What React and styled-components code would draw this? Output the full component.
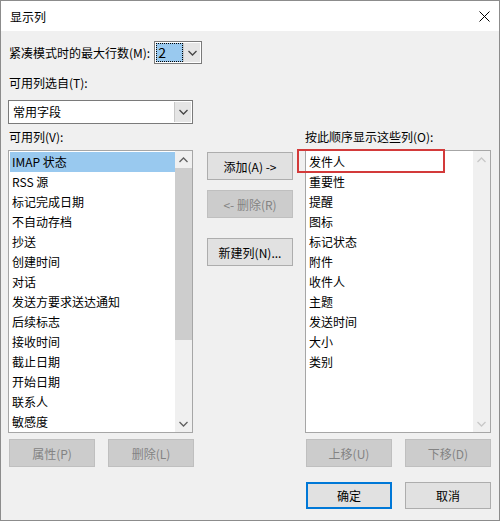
import styled, { createGlobalStyle } from "styled-components";

const Global = createGlobalStyle`
  html, body {
    margin: 0;
    padding: 0;
    background: #f0f0f0;
  }
  * {
    box-sizing: border-box;
  }
`;

const Window = styled.div`
  width: 500px;
  height: 521px;
  border: 1px solid #8c8c8c;
  background: #f0f0f0;
  display: flex;
  flex-direction: column;
  font-family: "Noto Sans CJK SC", "Liberation Sans", sans-serif;
  font-size: 12px;
  color: #000;
`;

const TitleBar = styled.div`
  height: 30px;
  flex: none;
  background: #fff;
  display: flex;
  align-items: center;
  justify-content: space-between;
  padding: 0 9px 0 9px;
  font-size: 12px;
`;

const Body = styled.div`
  padding: 10px 8px 0 7px;
  display: flex;
  flex-direction: column;
`;

const Row = styled.div`
  display: flex;
  align-items: center;
  gap: ${(p) => p.$gap || 0}px;
  padding-left: ${(p) => p.$indent || 0}px;
`;

const Label = styled.div`
  line-height: 20px;
  height: 20px;
  white-space: nowrap;
  margin-top: ${(p) => p.$top || 0}px;
  padding-left: ${(p) => p.$indent || 0}px;
`;

const Spin = styled.div`
  width: 48px;
  height: 23px;
  border: 1px solid #7a7a7a;
  background: #fff;
  display: flex;
  padding: 1px;
`;

const SpinValue = styled.div`
  flex: 1;
  background: #99c9ef;
  outline: 1px dotted #000;
  outline-offset: -1px;
  font-size: 14px;
  line-height: 19px;
  padding-left: 2px;
`;

const DropButton = styled.div`
  width: 17px;
  flex: none;
  background: #e5e5e5;
  border-left: 1px solid #c8c8c8;
  display: flex;
  align-items: center;
  justify-content: center;
`;

const Select = styled.div`
  width: 185px;
  height: 24px;
  margin-top: 7px;
  border: 1px solid #7a7a7a;
  background: #fff;
  display: flex;
  padding: 1px;
`;

const SelectText = styled.div`
  flex: 1;
  line-height: 20px;
  padding-left: 3px;
`;

const Columns = styled.div`
  display: flex;
  margin-top: 3px;
`;

const Column = styled.div`
  width: ${(p) => p.$w}px;
  margin-left: ${(p) => p.$ml || 0}px;
  display: flex;
  flex-direction: column;
  flex: none;
`;

const MiddleColumn = styled(Column)`
  padding-top: 25px;
  gap: 10px;
`;

const ListBox = styled.div`
  position: relative;
  height: 283px;
  border: 1px solid #a6a6a6;
  background: #fff;
  display: flex;
  padding: 1px 0 0 1px;
  margin-top: 3px;
`;

const Items = styled.div`
  flex: 1;
  display: flex;
  flex-direction: column;
`;

const Item = styled.div`
  height: 20px;
  line-height: 20px;
  padding-left: 2px;
  white-space: nowrap;
  background: ${(p) => (p.$selected ? "#99c9ef" : "transparent")};
`;

const Scrollbar = styled.div`
  width: 17px;
  flex: none;
  background: #f0f0f0;
  display: flex;
  flex-direction: column;
  margin-top: -1px;
`;

const ScrollArrow = styled.div`
  height: 17px;
  flex: none;
  display: flex;
  align-items: center;
  justify-content: center;
`;

const Thumb = styled.div`
  height: 172px;
  flex: none;
  background: #cdcdcd;
`;

const Track = styled.div`
  flex: 1;
`;

const Highlight = styled.div`
  position: absolute;
  left: -9px;
  top: -2px;
  width: 148px;
  height: 24px;
  border: 2px solid #d33a3a;
  pointer-events: none;
`;

const Button = styled.div`
  width: 86px;
  height: ${(p) => p.$h || 28}px;
  flex: none;
  display: flex;
  align-items: center;
  justify-content: center;
  white-space: nowrap;
  background: ${(p) => (p.$disabled ? "#cccccc" : "#e1e1e1")};
  color: ${(p) => (p.$disabled ? "#838383" : "#000")};
  border: 1px solid ${(p) => (p.$disabled ? "#bfbfbf" : p.$default ? "#0078d7" : "#adadad")};
  box-shadow: ${(p) => (p.$default ? "inset 0 0 0 1px #0078d7" : "none")};
  margin-top: ${(p) => p.$top || 0}px;
`;

const ButtonRow = styled.div`
  display: flex;
  gap: 13px;
  margin-top: ${(p) => p.$top || 6}px;
  padding-left: ${(p) => p.$indent || 0}px;
`;

const Chevron = ({ up, color = "#606060" }) => (
  <svg width="9" height="6" viewBox="0 0 9 6">
    <polyline
      points={up ? "0.5,5 4.5,1 8.5,5" : "0.5,1 4.5,5 8.5,1"}
      fill="none"
      stroke={color}
      strokeWidth="1.3"
    />
  </svg>
);

const CloseIcon = () => (
  <svg width="11" height="11" viewBox="0 0 11 11">
    <path d="M0.5 0.5 L10.5 10.5 M10.5 0.5 L0.5 10.5" stroke="#000" strokeWidth="1" />
  </svg>
);

const available = [
  "IMAP 状态",
  "RSS 源",
  "标记完成日期",
  "不自动存档",
  "抄送",
  "创建时间",
  "对话",
  "发送方要求送达通知",
  "后续标志",
  "接收时间",
  "截止日期",
  "开始日期",
  "联系人",
  "敏感度",
];

const shown = [
  "发件人",
  "重要性",
  "提醒",
  "图标",
  "标记状态",
  "附件",
  "收件人",
  "主题",
  "发送时间",
  "大小",
  "类别",
];

export default function App() {
  return (
    <>
      <Global />
      <Window>
        <TitleBar>
          <span>显示列</span>
          <CloseIcon />
        </TitleBar>
        <Body>
          <Row $gap={4} $indent={1}>
            <Label>紧凑模式时的最大行数(M):</Label>
            <Spin>
              <SpinValue>2</SpinValue>
              <DropButton>
                <Chevron color="#444" />
              </DropButton>
            </Spin>
          </Row>
          <Label $top={9} $indent={1}>
            可用列选自(T):
          </Label>
          <Select>
            <SelectText>常用字段</SelectText>
            <DropButton>
              <Chevron color="#444" />
            </DropButton>
          </Select>
          <Columns>
            <Column $w={185}>
              <Label $indent={1}>可用列(V):</Label>
              <ListBox>
                <Items>
                  {available.map((t, i) => (
                    <Item key={t} $selected={i === 0}>
                      {t}
                    </Item>
                  ))}
                </Items>
                <Scrollbar>
                  <ScrollArrow>
                    <Chevron up />
                  </ScrollArrow>
                  <Thumb />
                  <Track />
                  <ScrollArrow>
                    <Chevron />
                  </ScrollArrow>
                </Scrollbar>
              </ListBox>
              <ButtonRow $indent={1}>
                <Button $disabled>属性(P)</Button>
                <Button $disabled>删除(L)</Button>
              </ButtonRow>
            </Column>
            <MiddleColumn $w={86} $ml={14}>
              <Button>添加(A) -&gt;</Button>
              <Button $disabled>&lt;- 删除(R)</Button>
              <Button $top={10}>新建列(N)...</Button>
            </MiddleColumn>
            <Column $w={186} $ml={12}>
              <Label>按此顺序显示这些列(O):</Label>
              <ListBox>
                <Items>
                  {shown.map((t) => (
                    <Item key={t}>{t}</Item>
                  ))}
                </Items>
                <Scrollbar>
                  <ScrollArrow>
                    <Chevron up color="#c8c8c8" />
                  </ScrollArrow>
                  <Track />
                  <ScrollArrow>
                    <Chevron color="#c8c8c8" />
                  </ScrollArrow>
                </Scrollbar>
                <Highlight />
              </ListBox>
              <ButtonRow $indent={1}>
                <Button $disabled>上移(U)</Button>
                <Button $disabled>下移(D)</Button>
              </ButtonRow>
              <ButtonRow $top={15} $indent={1}>
                <Button $default $h={27}>
                  确定
                </Button>
                <Button $h={27}>取消</Button>
              </ButtonRow>
            </Column>
          </Columns>
        </Body>
      </Window>
    </>
  );
}
